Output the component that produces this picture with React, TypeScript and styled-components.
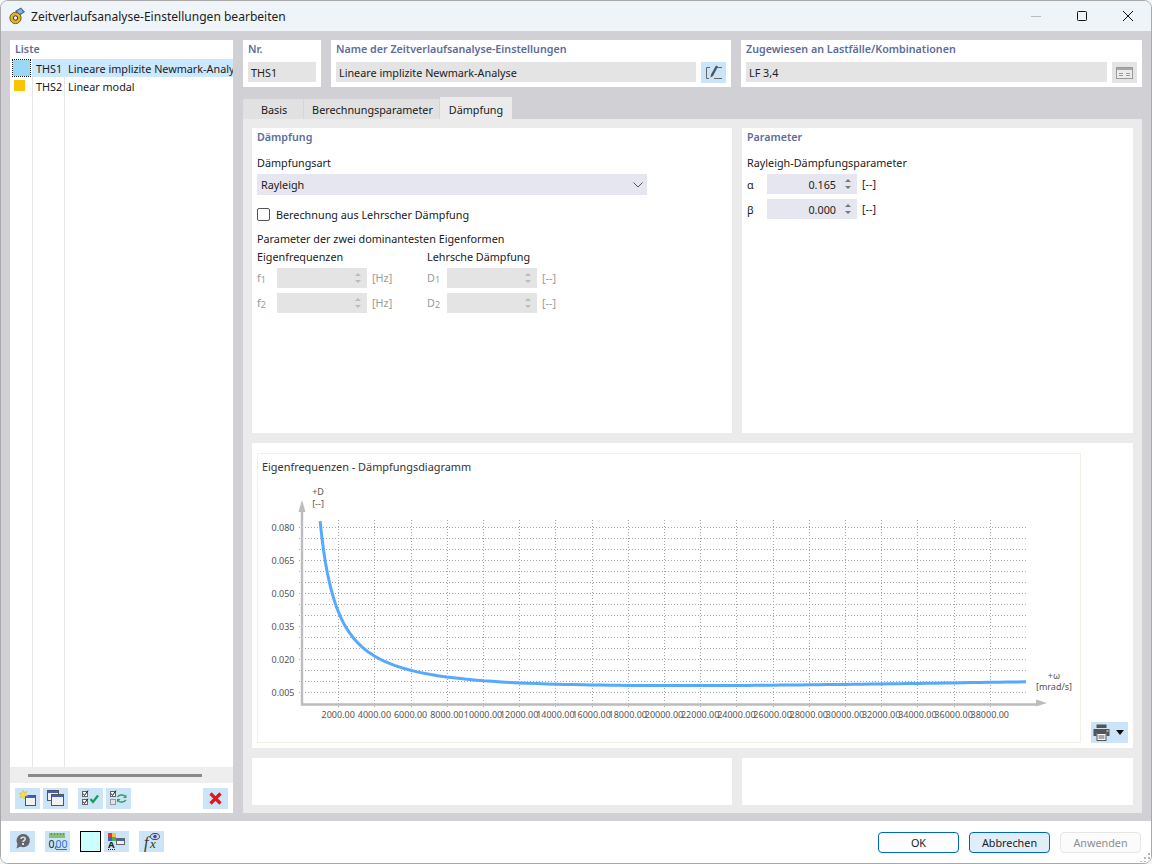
import styled, { createGlobalStyle } from "styled-components";

const GlobalStyle = createGlobalStyle`
  html, body {
    margin: 0;
    padding: 0;
    background: #f4f4f4;
  }
  * {
    box-sizing: border-box;
  }
`;

const FONT = `"Noto Sans", "Open Sans", sans-serif`;

const Window = styled.div`
  position: relative;
  width: 1152px;
  height: 864px;
  display: flex;
  flex-direction: column;
  overflow: hidden;
  border: 1px solid #a9a9a9;
  border-radius: 8px;
  font-family: ${FONT};
  font-size: 10.8px;
  color: #1a1a1a;
  background: #fff;
`;

const TitleBar = styled.div`
  height: 30px;
  flex: none;
  display: flex;
  align-items: center;
  padding-left: 7px;
  background: #eff4f9;
`;

const TitleText = styled.div`
  margin-left: 5px;
  font-size: 12.05px;
  color: #1c1c1c;
`;

const WindowButtons = styled.div`
  margin-left: auto;
  display: flex;
  align-items: center;
`;

const WindowButton = styled.div`
  width: 46px;
  height: 30px;
  display: flex;
  align-items: center;
  justify-content: center;
`;

const Body = styled.div`
  flex: 1;
  min-height: 0;
  display: flex;
  gap: 10px;
  padding: 9px 9px 8px 9px;
  background: #d1d0d5;
`;

const LeftPanel = styled.div`
  width: 223px;
  flex: none;
  display: flex;
  flex-direction: column;
  background: #fff;
`;

const SectionTitle = styled.div`
  height: 18px;
  line-height: 18px;
  padding-left: 5px;
  font-size: 10.7px;
  font-weight: 600;
  color: #5d6c9c;
  white-space: nowrap;
`;

const ListBody = styled.div`
  flex: 1;
  display: flex;
  flex-direction: column;
  margin-top: 1px;
  background-image: linear-gradient(#e6e6e6, #e6e6e6),
    linear-gradient(#e6e6e6, #e6e6e6);
  background-size: 1px 100%;
  background-position: 22px 0, 54px 0;
  background-repeat: no-repeat;
`;

const ListRow = styled.div`
  height: 18px;
  display: grid;
  grid-template-columns: 22px 32px 1fr;
  align-items: center;
  white-space: nowrap;
  overflow: hidden;
`;

const Swatch = styled.div<{ $selected?: boolean; $color: string }>`
  width: ${(p) => (p.$selected ? "19px" : "11px")};
  height: ${(p) => (p.$selected ? "18px" : "11px")};
  margin-left: ${(p) => (p.$selected ? "2px" : "4px")};
  margin-top: ${(p) => (p.$selected ? "0" : "-1px")};
  background: ${(p) => p.$color};
  outline: ${(p) => (p.$selected ? "1px dotted #222" : "none")};
  outline-offset: -1px;
  border: ${(p) => (p.$selected ? "1px solid #fff" : "none")};
`;

const RowCode = styled.div<{ $selected?: boolean }>`
  height: 18px;
  line-height: 20px;
  padding-left: 4px;
  background: ${(p) => (p.$selected ? "#cce8ff" : "transparent")};
`;

const RowText = styled.div<{ $selected?: boolean }>`
  height: 18px;
  line-height: 20px;
  padding-left: 4px;
  overflow: hidden;
  background: ${(p) => (p.$selected ? "#cce8ff" : "transparent")};
`;

const ScrollTrack = styled.div`
  height: 16px;
  flex: none;
  display: flex;
  align-items: center;
  padding-left: 18px;
  background: #eeeeee;
`;

const ScrollThumb = styled.div`
  width: 174px;
  height: 3px;
  background: #8a8a8a;
`;

const ListToolbar = styled.div`
  height: 30px;
  flex: none;
  display: flex;
  align-items: flex-start;
  padding: 5px 5px 0;
`;

const ToolButton = styled.div<{ $gap?: number; $push?: boolean; $color?: string }>`
  width: 25px;
  height: 21px;
  flex: none;
  margin-left: ${(p) => (p.$push ? "auto" : `${p.$gap ?? 0}px`)};
  display: flex;
  align-items: center;
  justify-content: center;
  background: ${(p) => p.$color ?? "#cbe4f8"};
`;

const RightColumn = styled.div`
  flex: 1;
  min-width: 0;
  display: flex;
  flex-direction: column;
`;

const TopRow = styled.div`
  height: 47px;
  flex: none;
  display: flex;
  gap: 10px;
`;

const TopCard = styled.div<{ $width?: number }>`
  ${(p) => (p.$width ? `width: ${p.$width}px; flex: none;` : "flex: 1;")}
  background: #fff;
  display: flex;
  flex-direction: column;
`;

const TopFieldRow = styled.div`
  display: flex;
  gap: 5px;
  padding: 4px 5px 0;
`;

const ReadField = styled.div`
  flex: 1;
  height: 20px;
  line-height: 22px;
  padding-left: 3px;
  background: #e4e4e4;
  white-space: nowrap;
  color: #222;
`;

const Tabs = styled.div`
  height: 22px;
  margin-top: 10px;
  flex: none;
  display: flex;
  align-items: flex-end;
`;

const Tab = styled.div<{ $width: number; $active?: boolean }>`
  width: ${(p) => p.$width}px;
  height: ${(p) => (p.$active ? "22px" : "20px")};
  padding-left: ${(p) => (p.$active ? "0" : "2px")};
  text-align: center;
  line-height: ${(p) => (p.$active ? "26px" : "22px")};
  background: ${(p) => (p.$active ? "#ebebeb" : "#e1e1e1")};
  border-right: ${(p) => (p.$active ? "none" : "1px solid #d5d5d5")};
  white-space: nowrap;
`;

const TabPanel = styled.div`
  flex: 1;
  min-height: 0;
  padding: 9px 9px 8px;
  display: grid;
  grid-template-columns: 480px 391px;
  grid-template-rows: 305px 305px 47px;
  gap: 10px;
  background: #ebebeb;
`;

const Card = styled.div`
  background: #fff;
  min-width: 0;
`;

const CardBody = styled.div`
  padding: 0 5px;
  display: flex;
  flex-direction: column;
`;

const FieldLabel = styled.div<{ $top?: number; $bottom?: number }>`
  height: 18px;
  line-height: 18px;
  margin-top: ${(p) => p.$top ?? 0}px;
  margin-bottom: ${(p) => p.$bottom ?? 0}px;
  white-space: nowrap;
`;

const SelectBox = styled.div`
  width: 390px;
  height: 21px;
  display: flex;
  align-items: center;
  justify-content: space-between;
  padding: 0 4px 0 4px;
  background: #e6e6f0;
`;

const CheckRow = styled.div`
  height: 14px;
  margin-top: 12px;
  display: flex;
  align-items: center;
  gap: 6px;
  line-height: 13px;
`;

const CheckBox = styled.div`
  width: 13px;
  height: 13px;
  border: 1px solid #555;
  border-radius: 2px;
  background: #fff;
`;

const ColumnsRow = styled.div`
  display: flex;
`;

const ParamColumn = styled.div`
  width: 170px;
  flex: none;
`;

const ParamRow = styled.div`
  height: 20px;
  margin-bottom: 5px;
  display: flex;
  align-items: center;
`;

const ParamName = styled.div<{ $disabled?: boolean }>`
  width: 20px;
  flex: none;
  color: ${(p) => (p.$disabled ? "#9a9a9a" : "#222")};
`;

const Sub = styled.span`
  font-size: 9px;
  vertical-align: -1px;
`;

const SpinInput = styled.div<{ $disabled?: boolean }>`
  width: 90px;
  height: 20px;
  flex: none;
  display: flex;
  align-items: center;
  justify-content: flex-end;
  background: ${(p) => (p.$disabled ? "#e4e4e4" : "#e6e6f0")};
`;

const SpinValue = styled.div`
  margin-right: 3px;
  color: #222;
`;

const Spinner = styled.div`
  width: 18px;
  display: flex;
  flex-direction: column;
  align-items: center;
  gap: 4px;
`;

const Unit = styled.div<{ $disabled?: boolean }>`
  margin-left: 5px;
  margin-top: -1px;
  color: ${(p) => (p.$disabled ? "#9a9a9a" : "#222")};
`;

const ChartCard = styled(Card)`
  grid-column: 1 / span 2;
  display: flex;
  padding: 10px 5px 5px;
`;

const ChartFrame = styled.div`
  width: 824px;
  flex: none;
  border: 1px solid #f3f1e6;
  display: flex;
  flex-direction: column;
`;

const ChartTitle = styled.div`
  height: 26px;
  line-height: 26px;
  padding-left: 4px;
  font-size: 10.9px;
  color: #333;
`;

const ChartSide = styled.div`
  flex: 1;
  display: flex;
  align-items: flex-end;
  justify-content: flex-end;
`;

const PrintButton = styled.div`
  width: 37px;
  height: 21px;
  display: flex;
  align-items: center;
  gap: 6px;
  padding-left: 2px;
  background: #cbe4f8;
`;

const Footer = styled.div`
  height: 42px;
  flex: none;
  display: flex;
  align-items: flex-start;
  padding: 10px 10px 0 9px;
  background: #fff;
`;

const DialogButton = styled.div<{ $variant?: "primary" | "hover" | "disabled"; $push?: boolean }>`
  width: 81px;
  height: 21px;
  margin-top: 1px;
  margin-left: ${(p) => (p.$push ? "auto" : "10px")};
  line-height: 20px;
  text-align: center;
  border-radius: 4px;
  border: 1px solid ${(p) => (p.$variant === "disabled" ? "#e6e6e6" : "#0067c0")};
  background: ${(p) =>
    p.$variant === "disabled" ? "#fbfbfb" : p.$variant === "hover" ? "#e0eef9" : "#fdfdfd"};
  color: ${(p) => (p.$variant === "disabled" ? "#8e8e8e" : "#1a1a1a")};
`;

const ColorBox = styled.div`
  width: 21px;
  height: 21px;
  margin-left: 10px;
  border: 1px solid #000;
  background: #ccffff;
`;

const ResizeGrip = styled.svg`
  position: absolute;
  right: 1px;
  bottom: 1px;
`;

const AppIcon = () => (
  <svg width="18" height="18" viewBox="0 0 18 18">
    <path d="M7 4 L13 0.5 L17 5 L11 9 Z" fill="#3d6fa8" />
    <path d="M9 4 L13 2 L15 5 L11 7 Z" fill="#8fb2d6" />
    <circle cx="7.5" cy="11" r="5.6" fill="#e5b52a" stroke="#6b5a20" />
    <circle cx="7.5" cy="11" r="2.2" fill="#f7f3e0" stroke="#3a3320" />
  </svg>
);

const EditIcon = () => (
  <svg width="25" height="21" viewBox="0 0 25 21">
    <path d="M9 5.5H5.5V16.5H8" fill="none" stroke="#666" />
    <path d="M15 3.5 L17 4.5 L12 14 L9.5 15.5 L10 12.5 Z" fill="#555" />
    <path d="M16 5.5H21M13 16.5H21" stroke="#666" />
  </svg>
);

const AssignIcon = () => (
  <svg width="17" height="12" viewBox="0 0 17 12">
    <rect x="0.5" y="0.5" width="16" height="11" fill="#ececec" stroke="#9a9a9a" />
    <rect x="1" y="1" width="15" height="2" fill="#a5a5a5" />
    <path d="M3 6.5H7M10 6.5H14M3 8.5H7M10 8.5H14" stroke="#9a9a9a" />
  </svg>
);

const NewIcon = () => (
  <svg width="25" height="21" viewBox="0 0 25 21">
    <rect x="10.5" y="7.5" width="10" height="10" fill="#f2f2f2" stroke="#555" />
    <rect x="11" y="8" width="9" height="2" fill="#3f5fd0" />
    <path d="M8 2 L9 4.5 L12 3.5 L10.5 6.2 L13 8 L10 8 L9.5 11 L7.5 8.8 L5 10 L6 7.2 L4 5.5 L7 5 Z" fill="#f7e13c" stroke="#c9a92a" strokeWidth="0.4" />
  </svg>
);

const CopyIcon = () => (
  <svg width="25" height="21" viewBox="0 0 25 21">
    <rect x="4.5" y="2.5" width="11" height="10" fill="#f2f2f2" stroke="#555" />
    <rect x="5" y="3" width="10" height="2" fill="#3f5fd0" />
    <rect x="8.5" y="6.5" width="12" height="11" fill="#f2f2f2" stroke="#555" />
    <rect x="9" y="7" width="11" height="2" fill="#3f5fd0" />
  </svg>
);

const CheckAllIcon = () => (
  <svg width="25" height="21" viewBox="0 0 25 21">
    <rect x="4.5" y="3.5" width="5" height="5" fill="#fff" stroke="#666" />
    <rect x="4.5" y="11.5" width="5" height="5" fill="#fff" stroke="#666" />
    <path d="M5 5.5 L6.5 7.5 L10 2.5M5 13.5 L6.5 15.5 L10 10.5" fill="none" stroke="#222" />
    <path d="M12.5 11 L15 14 L20 7.5" fill="none" stroke="#13a05a" strokeWidth="2.2" />
  </svg>
);

const ToggleIcon = () => (
  <svg width="25" height="21" viewBox="0 0 25 21">
    <rect x="4.5" y="3.5" width="5" height="5" fill="#fff" stroke="#666" />
    <rect x="4.5" y="11.5" width="5" height="5" fill="#e2e2e2" stroke="#999" />
    <path d="M5 5.5 L6.5 7.5 L10 2.5" fill="none" stroke="#222" />
    <path d="M11.5 9 C13 6.5 16.5 6.5 19 8" fill="none" stroke="#2aa05a" strokeWidth="1.4" />
    <path d="M20.5 6.5V10H17Z" fill="#2aa05a" />
    <path d="M20 12 C18 14.5 14.5 14.5 12.5 13" fill="none" stroke="#2aa05a" strokeWidth="1.4" />
    <path d="M11 14.5V11H14.5Z" fill="#2aa05a" />
  </svg>
);

const DeleteIcon = () => (
  <svg width="13" height="13" viewBox="0 0 13 13">
    <path d="M1.5 1.5 L11.5 11.5 M11.5 1.5 L1.5 11.5" stroke="#e8141c" strokeWidth="3.2" />
  </svg>
);

const HelpIcon = () => (
  <svg width="25" height="21" viewBox="0 0 25 21">
    <path d="M13 3 A6.6 6.6 0 1 1 10.5 15.6 L6.5 17.5 L7.5 13 A6.6 6.6 0 0 1 13 3 Z" fill="#666" />
    <path d="M10.8 7.8 C11.2 5.8 15.2 5.8 15.2 8 C15.2 9.6 13 9.4 13 11" fill="none" stroke="#cbe4f8" strokeWidth="1.6" />
    <rect x="12" y="12" width="2" height="2" fill="#cbe4f8" />
  </svg>
);

const UnitsIcon = () => (
  <svg width="25" height="21" viewBox="0 0 25 21">
    <rect x="4" y="2" width="16" height="5" fill="#86c26b" />
    <path d="M6.5 2V4M9.5 2V4M12.5 2V4M15.5 2V4M18.5 2V4" stroke="#5e9a47" />
    <text x="3.5" y="16.5" fontFamily={FONT} fontSize="10.5" fill="#222">0,</text>
    <text x="10.5" y="16.5" fontFamily={FONT} fontSize="10.5" fill="#2f6fd0">00</text>
    <path d="M11 18.5H22" stroke="#2f6fd0" />
  </svg>
);

const StyleIcon = () => (
  <svg width="25" height="21" viewBox="0 0 25 21">
    <rect x="4" y="2" width="4" height="4" fill="#d63a3a" />
    <rect x="8" y="2" width="4" height="4" fill="#e8c83a" />
    <rect x="4" y="6" width="4" height="4" fill="#3a62d6" />
    <rect x="8" y="6" width="4" height="4" fill="#4bb04b" />
    <text x="4" y="17" fontFamily={FONT} fontSize="9.5" fontWeight="700" fill="#222">A</text>
    <rect x="12.5" y="7.5" width="8" height="6" fill="#f2f2f2" stroke="#666" />
    <rect x="13" y="8" width="7" height="2" fill="#3f5fd0" />
    <path d="M4 18.5H12" stroke="#222" strokeDasharray="1 1" />
  </svg>
);

const FormulaIcon = () => (
  <svg width="25" height="21" viewBox="0 0 25 21">
    <text x="5" y="17" fontFamily='"Liberation Serif", serif' fontStyle="italic" fontSize="16" fill="#333">f</text>
    <text x="11" y="17" fontFamily='"Liberation Serif", serif' fontStyle="italic" fontSize="13" fill="#333">x</text>
    <ellipse cx="16" cy="5.5" rx="4.5" ry="3" fill="#cfd6ee" stroke="#444" />
    <circle cx="16" cy="5.5" r="1.7" fill="#3a4aa8" />
  </svg>
);

const PrinterIcon = () => (
  <svg width="17" height="17" viewBox="0 0 17 17">
    <rect x="3.5" y="0.5" width="10" height="3.5" fill="#555" />
    <path d="M0.5 5H16.5V12H13.5V9H3.5V12H0.5Z" fill="#555" />
    <rect x="4" y="9.5" width="9" height="7" fill="#fff" stroke="#555" />
    <path d="M5.5 12H11.5M5.5 14H11.5" stroke="#555" />
    <rect x="13.5" y="6.5" width="2" height="1" fill="#fff" />
  </svg>
);

const Triangle = ({ up, color }: { up: boolean; color: string }) => (
  <svg width="6" height="3" viewBox="0 0 6 3">
    <path d={up ? "M3 0 L6 3 H0 Z" : "M0 0 H6 L3 3 Z"} fill={color} />
  </svg>
);

const SpinField = ({ value, disabled }: { value?: string; disabled?: boolean }) => (
  <SpinInput $disabled={disabled}>
    {value && <SpinValue>{value}</SpinValue>}
    <Spinner>
      <Triangle up color={disabled ? "#bbb" : "#777"} />
      <Triangle up={false} color={disabled ? "#bbb" : "#777"} />
    </Spinner>
  </SpinInput>
);

const Y_LABELS = [
  { y: 527, t: "0.080" },
  { y: 560, t: "0.065" },
  { y: 593, t: "0.050" },
  { y: 626, t: "0.035" },
  { y: 659, t: "0.020" },
  { y: 692, t: "0.005" },
];

// svg coords: page x minus 258, page y minus 480
const OX = 44;
const OY = 223;
const STEP_X = 36.2;

const xFor = (w: number) => OX + (w / 2000) * STEP_X;
const yFor = (d: number) => 212 - ((d - 0.005) / 0.015) * 33;

function curvePath() {
  const pts: string[] = [];
  for (let w = 1000; w <= 40000; w += w < 8000 ? 100 : 500) {
    const d = 82.5 / w + 1.9e-7 * w;
    pts.push(`${xFor(w).toFixed(1)},${yFor(d).toFixed(1)}`);
  }
  return "M" + pts.join(" L");
}

const Chart = () => {
  const hLines = Array.from({ length: 16 }, (_, i) => 47 + i * 11);
  const vLines = Array.from({ length: 19 }, (_, i) => i + 1);
  return (
    <svg width="822" height="262" viewBox="0 0 822 262" fontFamily={FONT} fontSize="9">
      {hLines.map((y) => (
        <path key={y} d={`M${OX - 3} ${y + 0.5}H768`} stroke="#a4a4a4" strokeDasharray="1 2" />
      ))}
      {vLines.map((i) => (
        <path
          key={i}
          d={`M${Math.round(OX + i * STEP_X) + 0.5} 40V227`}
          stroke="#a4a4a4"
          strokeDasharray="1 2"
        />
      ))}
      <path d={`M${OX} 30V${OY + 1.5}H780`} fill="none" stroke="#bcbcbc" strokeWidth="2.4" />
      <path d={`M${OX - 3.5} 32L${OX} 20L${OX + 3.5} 32Z`} fill="#bcbcbc" />
      <path d="M778 219.5L789 223L778 226.5Z" fill="#bcbcbc" />
      <path d={curvePath()} fill="none" stroke="#55a9ff" strokeWidth="3" />
      {Y_LABELS.map((l) => (
        <text key={l.t} x={OX - 7.5} y={l.y - 480 + 3.5} textAnchor="end" fill="#555">
          {l.t}
        </text>
      ))}
      {vLines.map((i) => (
        <text key={i} x={OX + i * STEP_X} y={238} textAnchor="middle" fill="#555">
          {(i * 2000).toFixed(2)}
        </text>
      ))}
      <text x={60} y={15} textAnchor="middle" fill="#555">+D</text>
      <text x={60} y={27} textAnchor="middle" fill="#555">[--]</text>
      <text x={796} y={199} textAnchor="middle" fill="#555">+ω</text>
      <text x={796} y={210} textAnchor="middle" fill="#555">[mrad/s]</text>
    </svg>
  );
};

export default function App() {
  return (
    <>
      <GlobalStyle />
      <Window>
        <TitleBar>
          <AppIcon />
          <TitleText>Zeitverlaufsanalyse-Einstellungen bearbeiten</TitleText>
          <WindowButtons>
            <WindowButton>
              <svg width="10" height="10" viewBox="0 0 10 10">
                <path d="M0 5.5H10" stroke="#bbb" />
              </svg>
            </WindowButton>
            <WindowButton>
              <svg width="10" height="10" viewBox="0 0 10 10">
                <rect x="0.5" y="0.5" width="9" height="9" rx="1" fill="none" stroke="#111" />
              </svg>
            </WindowButton>
            <WindowButton>
              <svg width="10" height="10" viewBox="0 0 10 10">
                <path d="M0 0L10 10M10 0L0 10" stroke="#111" />
              </svg>
            </WindowButton>
          </WindowButtons>
        </TitleBar>
        <Body>
          <LeftPanel>
            <SectionTitle>Liste</SectionTitle>
            <ListBody>
              <ListRow>
                <Swatch $selected $color="#9bd8f8" />
                <RowCode $selected>THS1</RowCode>
                <RowText $selected>Lineare implizite Newmark-Analyse</RowText>
              </ListRow>
              <ListRow>
                <Swatch $color="#f9c400" />
                <RowCode>THS2</RowCode>
                <RowText>Linear modal</RowText>
              </ListRow>
            </ListBody>
            <ScrollTrack>
              <ScrollThumb />
            </ScrollTrack>
            <ListToolbar>
              <ToolButton><NewIcon /></ToolButton>
              <ToolButton $gap={3}><CopyIcon /></ToolButton>
              <ToolButton $gap={10}><CheckAllIcon /></ToolButton>
              <ToolButton $gap={3}><ToggleIcon /></ToolButton>
              <ToolButton $push><DeleteIcon /></ToolButton>
            </ListToolbar>
          </LeftPanel>
          <RightColumn>
            <TopRow>
              <TopCard $width={78}>
                <SectionTitle>Nr.</SectionTitle>
                <TopFieldRow>
                  <ReadField>THS1</ReadField>
                </TopFieldRow>
              </TopCard>
              <TopCard $width={400}>
                <SectionTitle>Name der Zeitverlaufsanalyse-Einstellungen</SectionTitle>
                <TopFieldRow>
                  <ReadField>Lineare implizite Newmark-Analyse</ReadField>
                  <ToolButton><EditIcon /></ToolButton>
                </TopFieldRow>
              </TopCard>
              <TopCard>
                <SectionTitle>Zugewiesen an Lastfälle/Kombinationen</SectionTitle>
                <TopFieldRow>
                  <ReadField>LF 3,4</ReadField>
                  <ToolButton $color="#e4e4e4"><AssignIcon /></ToolButton>
                </TopFieldRow>
              </TopCard>
            </TopRow>
            <Tabs>
              <Tab $width={61}>Basis</Tab>
              <Tab $width={136}>Berechnungsparameter</Tab>
              <Tab $width={72} $active>Dämpfung</Tab>
            </Tabs>
            <TabPanel>
              <Card>
                <SectionTitle>Dämpfung</SectionTitle>
                <CardBody>
                  <FieldLabel $top={8} $bottom={2}>Dämpfungsart</FieldLabel>
                  <SelectBox>
                    Rayleigh
                    <svg width="10" height="6" viewBox="0 0 10 6">
                      <path d="M0.5 0.5L5 5L9.5 0.5" fill="none" stroke="#555" />
                    </svg>
                  </SelectBox>
                  <CheckRow>
                    <CheckBox />
                    Berechnung aus Lehrscher Dämpfung
                  </CheckRow>
                  <FieldLabel $top={9}>Parameter der zwei dominantesten Eigenformen</FieldLabel>
                  <ColumnsRow>
                    <ParamColumn>
                      <FieldLabel $bottom={2}>Eigenfrequenzen</FieldLabel>
                      <ParamRow>
                        <ParamName $disabled>f<Sub>1</Sub></ParamName>
                        <SpinField disabled />
                        <Unit $disabled>[Hz]</Unit>
                      </ParamRow>
                      <ParamRow>
                        <ParamName $disabled>f<Sub>2</Sub></ParamName>
                        <SpinField disabled />
                        <Unit $disabled>[Hz]</Unit>
                      </ParamRow>
                    </ParamColumn>
                    <ParamColumn>
                      <FieldLabel $bottom={2}>Lehrsche Dämpfung</FieldLabel>
                      <ParamRow>
                        <ParamName $disabled>D<Sub>1</Sub></ParamName>
                        <SpinField disabled />
                        <Unit $disabled>[--]</Unit>
                      </ParamRow>
                      <ParamRow>
                        <ParamName $disabled>D<Sub>2</Sub></ParamName>
                        <SpinField disabled />
                        <Unit $disabled>[--]</Unit>
                      </ParamRow>
                    </ParamColumn>
                  </ColumnsRow>
                </CardBody>
              </Card>
              <Card>
                <SectionTitle>Parameter</SectionTitle>
                <CardBody>
                  <FieldLabel $top={8} $bottom={2}>Rayleigh-Dämpfungsparameter</FieldLabel>
                  <ParamRow>
                    <ParamName>α</ParamName>
                    <SpinField value="0.165" />
                    <Unit>[--]</Unit>
                  </ParamRow>
                  <ParamRow>
                    <ParamName>β</ParamName>
                    <SpinField value="0.000" />
                    <Unit>[--]</Unit>
                  </ParamRow>
                </CardBody>
              </Card>
              <ChartCard>
                <ChartFrame>
                  <ChartTitle>Eigenfrequenzen - Dämpfungsdiagramm</ChartTitle>
                  <Chart />
                </ChartFrame>
                <ChartSide>
                  <PrintButton>
                    <PrinterIcon />
                    <svg width="8" height="5" viewBox="0 0 8 5">
                      <path d="M0 0H8L4 5Z" fill="#111" />
                    </svg>
                  </PrintButton>
                </ChartSide>
              </ChartCard>
              <Card />
              <Card />
            </TabPanel>
          </RightColumn>
        </Body>
        <Footer>
          <ToolButton><HelpIcon /></ToolButton>
          <ToolButton $gap={10}><UnitsIcon /></ToolButton>
          <ColorBox />
          <ToolButton $gap={3}><StyleIcon /></ToolButton>
          <ToolButton $gap={10}><FormulaIcon /></ToolButton>
          <DialogButton $push $variant="primary">OK</DialogButton>
          <DialogButton $variant="hover">Abbrechen</DialogButton>
          <DialogButton $variant="disabled">Anwenden</DialogButton>
        </Footer>
        <ResizeGrip width="10" height="10" viewBox="0 0 10 10">
          <path d="M8 1h2v2H8zM4 5h2v2H4zM8 5h2v2H8zM0 9h2v1H0zM4 9h2v1H4zM8 9h2v1H8z" fill="#b5b5b5" />
        </ResizeGrip>
      </Window>
    </>
  );
}
